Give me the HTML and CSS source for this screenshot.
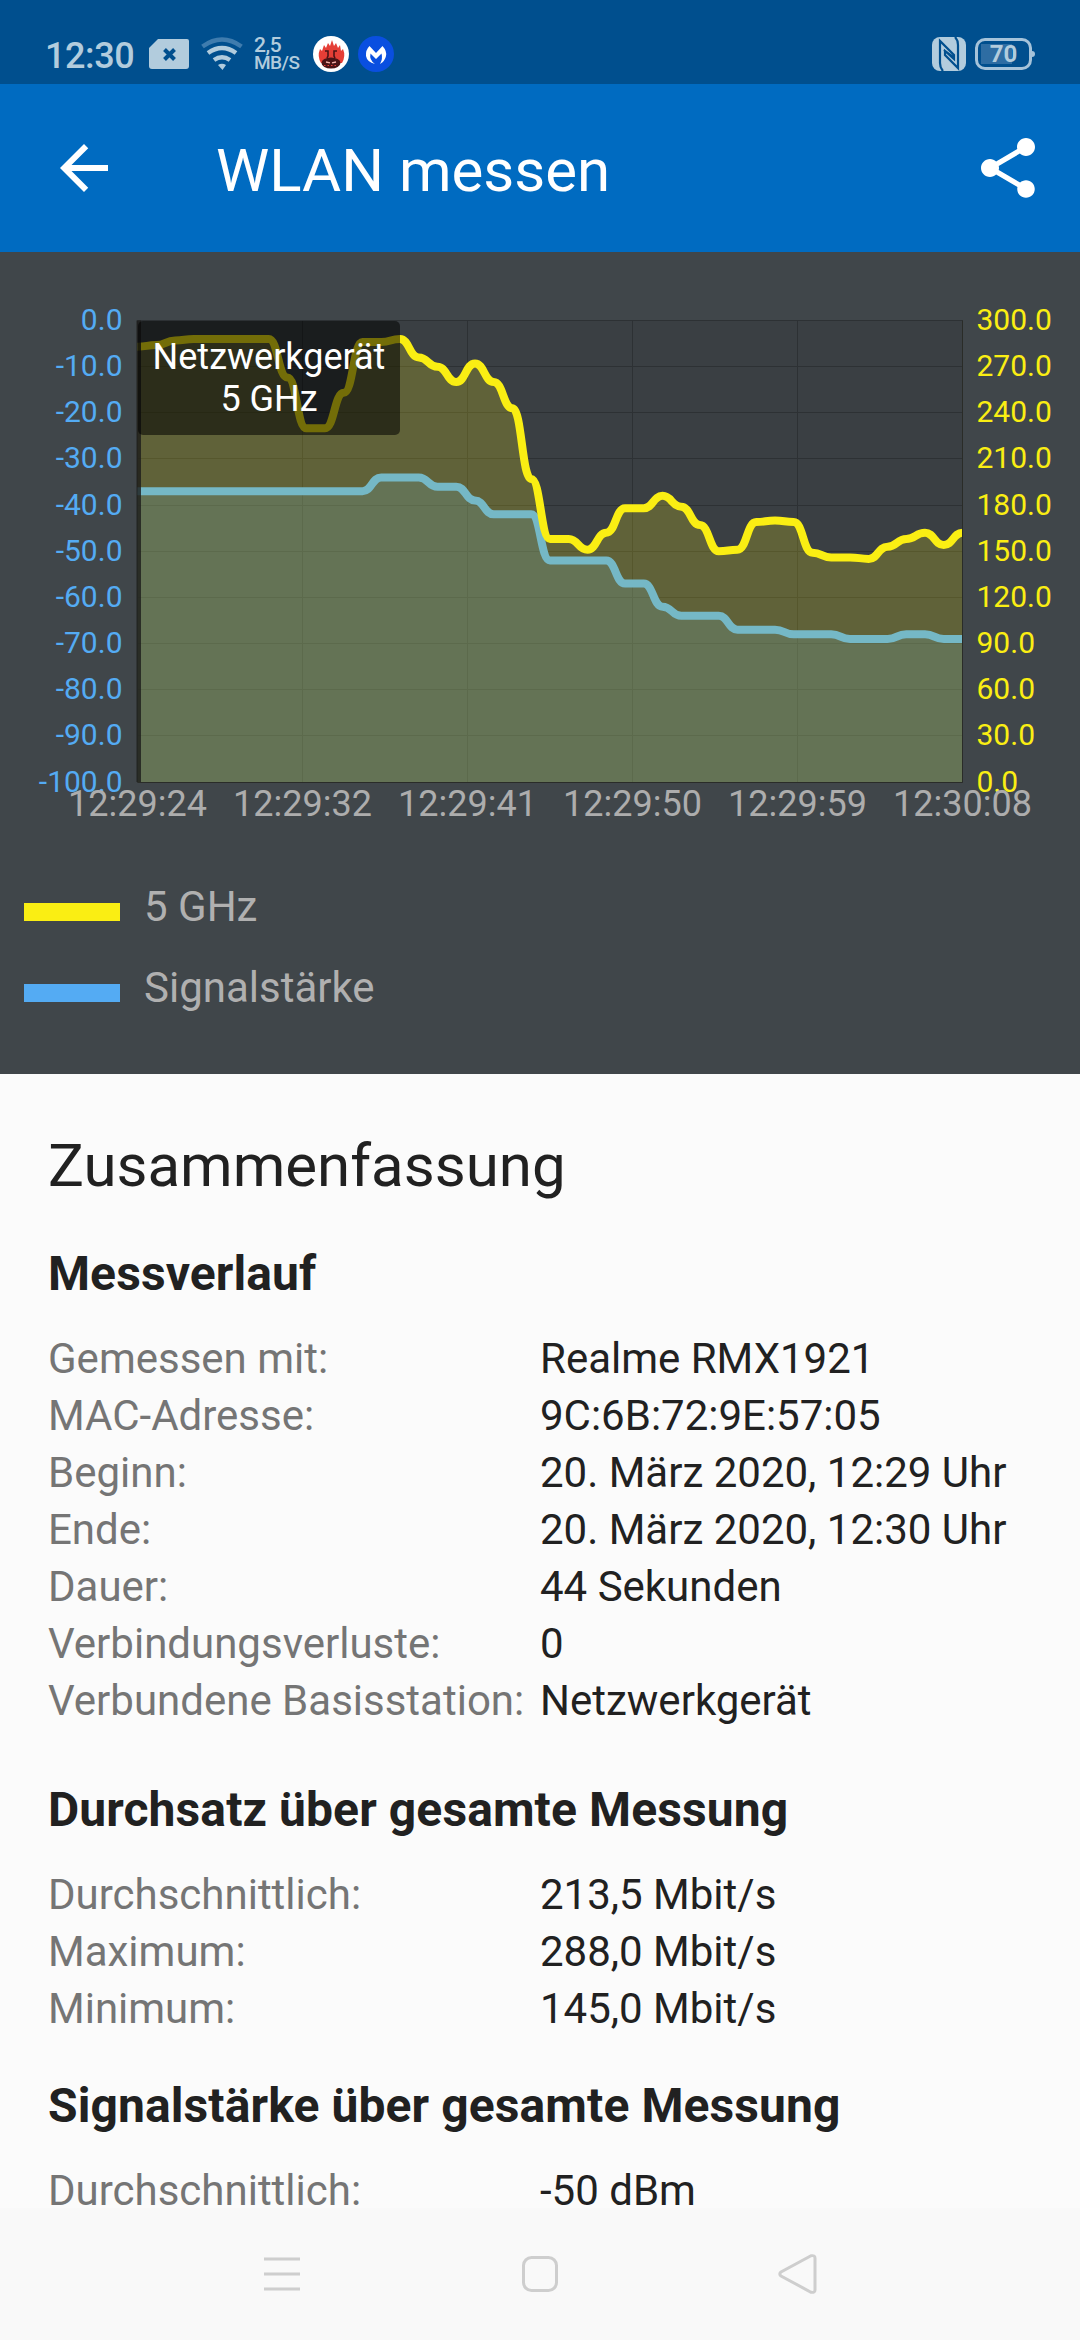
FILE: index.html
```html
<!DOCTYPE html>
<html lang="de">
<head>
    <meta charset="UTF-8">
    <meta name="viewport" content="width=device-width, initial-scale=1.0">
    <title>WLAN messen</title>
    <link rel="stylesheet" href="styles.css">
</head>
<body>
    <div class="statusbar">
        <span class="uhrzeit">12:30</span>
        <svg class="sim" width="40" height="30" viewBox="0 0 40 30">
            <path fill="#b2ccdd" d="M9 0H38Q40 0 40 2V27Q40 30 37 30H3Q0 30 0 27V9Z"/>
            <path stroke="#004f8e" stroke-width="4" d="M15.500 10.500l10 10M25.500 10.500l-10 10"/>
        </svg>
        <svg class="wifi" width="42" height="34" viewBox="0 0 42 34">
            <g fill="none" stroke="#b2ccdd" stroke-width="4.500">
                <path stroke="#3f7cae" d="M1.500 9.500Q21 -4.500 40.500 9.500"/>
                <path d="M7 16Q21 6 35 16"/>
                <path d="M13 23Q21 17.500 29 23"/>
            </g>
            <path fill="#b2ccdd" d="M17 28Q21 25.500 25 28L21.500 33Z"/>
        </svg>
        <div class="tempo"><span class="wert">2,5</span><span>MB/S</span></div>
        <svg class="app" width="36" height="36" viewBox="0 0 36 36">
            <circle cx="18" cy="18" r="18" fill="#fff"/>
            <path fill="#e53e36" d="M8 27Q4 20 7 13L9 15L11 9L13 12L15 7L17 10L19 4L21 10L23 7L25 12L27 9L28 15L30 13Q33 20 29 27Z"/>
            <ellipse cx="18" cy="27" rx="9.500" ry="5.500" fill="#4a1416"/>
            <path fill="none" stroke="#4a1416" stroke-width="1.600" d="M12 15h3v5l-1 2M24 15h-3v5l1 2"/>
            <path stroke="#f3b0a8" stroke-width="1.300" d="M13 26l4 .8M19 26.800l4-.8"/>
            <path stroke="#e53e36" stroke-width="1.200" stroke-dasharray="1.500 2" d="M11 29.500h14"/>
        </svg>
        <svg class="app" width="36" height="36" viewBox="0 0 36 36">
            <circle cx="18" cy="18" r="18" fill="#0a4fe0"/>
            <path fill="#fff" d="M11.500 10L18 17L24.500 10Q29 15 28 20Q27 25 22 28Q25 23 23.500 17.500L18 23L12.500 17.500Q11 24 17 28Q9 26 8 20Q7.500 14 11.500 10Z"/>
        </svg>
        <svg class="nfc" width="34" height="34" viewBox="0 0 34 34">
            <rect width="34" height="34" rx="8" fill="#b2ccdd"/>
            <path fill="none" stroke="#004f8e" stroke-width="2.200" d="M11 34Q8 31 8 26V4L22 18V22L12 13M23 0Q26 3 26 8V31L13 18V14L21 20"/>
        </svg>
        <div class="akku"><span>70</span></div>
    </div>

    <header class="appbar">
        <svg width="72" height="72" viewBox="0 0 24 24"><path fill="#fff" d="M20 11H7.830l5.590-5.590L12 4l-8 8 8 8 1.410-1.410L7.830 13H20v-2z"/></svg>
        <h1>WLAN messen</h1>
        <svg width="72" height="72" viewBox="0 0 24 24"><path fill="#fff" d="M18 16.080c-.76 0-1.440.3-1.960.77L8.910 12.700c.05-.23.09-.46.09-.7s-.04-.47-.09-.7l7.050-4.110c.54.5 1.250.81 2.040.81 1.660 0 3-1.340 3-3s-1.340-3-3-3-3 1.340-3 3c0 .24.04.47.09.7L8.040 9.810C7.500 9.310 6.790 9 6 9c-1.660 0-3 1.340-3 3s1.340 3 3 3c.79 0 1.500-.31 2.040-.81l7.120 4.160c-.05.21-.08.43-.08.65 0 1.610 1.310 2.920 2.920 2.920s2.920-1.310 2.920-2.920-1.310-2.920-2.920-2.920z"/></svg>
    </header>

    <section class="messung">
        <div class="diagramm">
            <svg id="diagramm" width="1080" height="600" viewBox="0 0 1080 600"></svg>
            <div class="tooltip">Netzwerkgerät<br>5 GHz</div>
        </div>
        <div class="legende">
            <div class="eintrag"><i class="gelb"></i>5 GHz</div>
            <div class="eintrag"><i class="blau"></i>Signalstärke</div>
        </div>
    </section>

    <main>
        <h2>Zusammenfassung</h2>

        <h3>Messverlauf</h3>
        <dl>
            <dt>Gemessen mit:</dt><dd>Realme RMX1921</dd>
            <dt>MAC-Adresse:</dt><dd>9C:6B:72:9E:57:05</dd>
            <dt>Beginn:</dt><dd>20. März 2020, 12:29 Uhr</dd>
            <dt>Ende:</dt><dd>20. März 2020, 12:30 Uhr</dd>
            <dt>Dauer:</dt><dd>44 Sekunden</dd>
            <dt>Verbindungsverluste:</dt><dd>0</dd>
            <dt>Verbundene Basisstation:</dt><dd>Netzwerkgerät</dd>
        </dl>

        <h3 class="durchsatz">Durchsatz über gesamte Messung</h3>
        <dl>
            <dt>Durchschnittlich:</dt><dd>213,5 Mbit/s</dd>
            <dt>Maximum:</dt><dd>288,0 Mbit/s</dd>
            <dt>Minimum:</dt><dd>145,0 Mbit/s</dd>
        </dl>

        <h3 class="signal">Signalstärke über gesamte Messung</h3>
        <dl>
            <dt>Durchschnittlich:</dt><dd>-50 dBm</dd>
        </dl>
    </main>

    <nav>
        <svg width="40" height="40" viewBox="0 0 40 40"><path d="M2 5H38M2 20H38M2 35H38"/></svg>
        <svg width="40" height="40" viewBox="0 0 40 40"><rect x="3.500" y="3.500" width="33" height="33" rx="8"/></svg>
        <svg width="40" height="40" viewBox="0 0 40 40"><path d="M33 1.800L3 18Q0.500 20 3 22L33 38.200Q37 39 37 36V4Q37 1 33 1.800Z"/></svg>
    </nav>

    <script src="diagramm.js"></script>
</body>
</html>
```
FILE: styles.css
```css
:root {
    --cor-status: #004f8e;
    --cor-appbar: #006bc1;
    --cor-diagramm: #40464a;
    --cor-gelb: #faee13;
    --cor-blau: #54abf3;
    --cor-status-icon: #b2ccdd;
    --cor-text: #212121;
    --cor-label: #757575;
}

* {
    box-sizing: border-box;
}

body {
    font-family: Roboto, sans-serif;
    background-color: #fbfbfb;
    color: var(--cor-text);
    margin: 0;
    height: 2340px;
    display: flex;
    flex-direction: column;
    overflow: hidden;
}

h1, h2, h3, dl, dd {
    margin: 0;
}

/* Statusleiste */
.statusbar {
    height: 84px;
    padding: 24px 48px 0 45px;
    display: flex;
    align-items: center;
    background-color: var(--cor-status);
    color: var(--cor-status-icon);
    flex-shrink: 0;
}

.uhrzeit {
    width: 104px;
    padding-top: 3px;
    font-size: 36px;
    font-weight: 500;
    line-height: 44px;
    letter-spacing: -0.4px;
}

.wifi {
    margin-left: 12px;
}

.tempo {
    display: flex;
    flex-direction: column;
    width: 59px;
    margin-left: 11px;
    font-size: 19px;
    font-weight: 500;
    line-height: 17px;
    letter-spacing: -0.5px;
}

.wert {
    font-size: 21px;
}

.app {
    margin-right: 9px;
}

.nfc {
    margin-left: auto;
}

.akku {
    position: relative;
    width: 57px;
    height: 32px;
    margin-left: 9px;
    border: 3px solid #a5c3da;
    border-radius: 10px;
    background: linear-gradient(#2e6da3, #2e6da3) 3px 3px / 31px 20px no-repeat;
    text-align: center;
    font-size: 24px;
    font-weight: 700;
    line-height: 26px;
}

.akku::after {
    content: "";
    position: absolute;
    right: -6px;
    top: 10px;
    width: 3px;
    height: 6px;
    background-color: #a5c3da;
    border-radius: 0 3px 3px 0;
}

/* Titelleiste */
.appbar {
    height: 168px;
    padding: 0 36px 0 48px;
    display: flex;
    align-items: center;
    background-color: var(--cor-appbar);
    color: white;
    flex-shrink: 0;
}

.appbar h1 {
    flex: 1;
    margin-left: 96px;
    padding-top: 4px;
    font-size: 60px;
    font-weight: 400;
}

/* Diagramm und Legende */
.messung {
    height: 822px;
    background-color: var(--cor-diagramm);
    flex-shrink: 0;
}

.diagramm {
    position: relative;
    height: 600px;
}

.diagramm svg {
    display: block;
}

.gitter {
    stroke: #2d3134;
    stroke-width: 1;
}

.achse {
    font-size: 30px;
}

.links {
    fill: var(--cor-blau);
    text-anchor: end;
}

.rechts {
    fill: var(--cor-gelb);
}

.zeit {
    fill: #adadad;
    font-size: 36px;
    text-anchor: middle;
}

.linie {
    fill: none;
    stroke-width: 8;
    stroke-linejoin: round;
}

.tooltip {
    position: absolute;
    left: 138px;
    top: 69px;
    width: 262px;
    height: 114px;
    padding-top: 15px;
    border-radius: 5px;
    background-color: rgba(0, 0, 0, 0.54);
    color: white;
    text-align: center;
    font-size: 36px;
    line-height: 42px;
}

.legende {
    padding: 14px 24px;
}

.eintrag {
    display: flex;
    align-items: center;
    gap: 24px;
    height: 81px;
    color: #b0b0b0;
    font-size: 42px;
}

.eintrag i {
    width: 96px;
    height: 18px;
    margin-top: 10px;
}

.gelb {
    background-color: var(--cor-gelb);
}

.blau {
    background-color: var(--cor-blau);
}

/* Zusammenfassung */
main {
    flex: 1;
    min-height: 0;
    padding: 57px 48px 0;
}

h2 {
    font-size: 60px;
    font-weight: 400;
    line-height: 70px;
}

h3 {
    margin-top: 45px;
    font-size: 48px;
    font-weight: 700;
    line-height: 56px;
    letter-spacing: 0.1px;
}

dl {
    display: grid;
    grid-template-columns: 492px 1fr;
    margin-top: 28px;
    font-size: 42px;
    line-height: 57px;
    white-space: nowrap;
}

dt {
    color: var(--cor-label);
}

.durchsatz {
    margin-top: 53px;
}

.signal {
    margin-top: 41px;
}

/* Navigationsleiste */
nav {
    height: 132px;
    padding: 0 262px;
    display: flex;
    align-items: center;
    justify-content: space-between;
    background-color: #f9f9f9;
    flex-shrink: 0;
}

nav svg {
    fill: none;
    stroke: #cecece;
    stroke-width: 3;
}
```
FILE: diagramm.js
```js
const durchsatz = [
    283, 284, 287, 288, 288, 288, 288, 288, 263, 230, 230, 253, 286, 286, 288,
    276, 270, 260, 272, 260, 243, 197, 158, 158, 151, 162, 178, 178, 186, 179,
    167, 150, 151, 169, 170, 169, 149, 146, 146, 145, 153, 158, 162, 154, 162
];
const signal = [
    -37, -37, -37, -37, -37, -37, -37, -37, -37, -37, -37, -37, -37, -34, -34,
    -34, -36, -36, -39, -42, -42, -42, -52, -52, -52, -52, -57, -57, -62, -64,
    -64, -64, -67, -67, -67, -68, -68, -68, -69, -69, -69, -68, -68, -69, -69
];
const zeiten = ['12:29:24', '12:29:32', '12:29:41', '12:29:50', '12:29:59', '12:30:08'];

const links = 137.5, oben = 68.5, breite = 825, hoehe = 461.5;
const unten = oben + hoehe, rechts = links + breite;

// weiche Kurve, an jedem Messpunkt waagerecht
function kurve(werte, min, max) {
    const x = i => links + i * breite / (werte.length - 1);
    const y = i => unten - (werte[i] - min) / (max - min) * hoehe;
    let d = `M${x(0)} ${y(0)}`;
    for (let i = 1; i < werte.length; i++) {
        const mitte = (x(i - 1) + x(i)) / 2;
        d += `C${mitte} ${y(i - 1)} ${mitte} ${y(i)} ${x(i)} ${y(i)}`;
    }
    return d;
}

function reihe(werte, min, max, farbe) {
    const d = kurve(werte, min, max);
    return `<path d="${d}V${unten}H${links}Z" style="fill:${farbe}" fill-opacity="0.2"/>
            <path class="linie" d="${d}" style="stroke:${farbe}"/>`;
}

let html = `<rect x="${links}" y="${oben}" width="${breite}" height="${hoehe}" fill="#3a3f43"/>`;

for (let i = 0; i <= 10; i++) {
    const y = Math.floor(oben + i * hoehe / 10) + 0.5;
    html += `<path class="gitter" d="M${links} ${y}H${rechts}"/>`;
    html += `<text class="achse links" x="122.5" y="${y + 9.5}">${(-i * 10 || 0).toFixed(1)}</text>`;
    html += `<text class="achse rechts" x="976.5" y="${y + 9.5}">${(300 - i * 30).toFixed(1)}</text>`;
}
zeiten.forEach((zeit, i) => {
    const x = links + i * breite / 5;
    html += `<path class="gitter" d="M${x} ${oben}V${unten}"/>`;
    html += `<text class="zeit" x="${x}" y="564">${zeit}</text>`;
});

html += reihe(signal, -100, 0, '#54abf3');
html += reihe(durchsatz, 0, 300, '#faee13');
html += `<rect x="136.5" y="${oben}" width="4.5" height="${hoehe}" fill="#1c1c1a" fill-opacity="0.8"/>`;
html += `<path d="M${links} ${unten + 0.5}H${rechts}V${oben}" fill="none" stroke="#2a2c28"/>`;

document.getElementById('diagramm').innerHTML = html;
```
